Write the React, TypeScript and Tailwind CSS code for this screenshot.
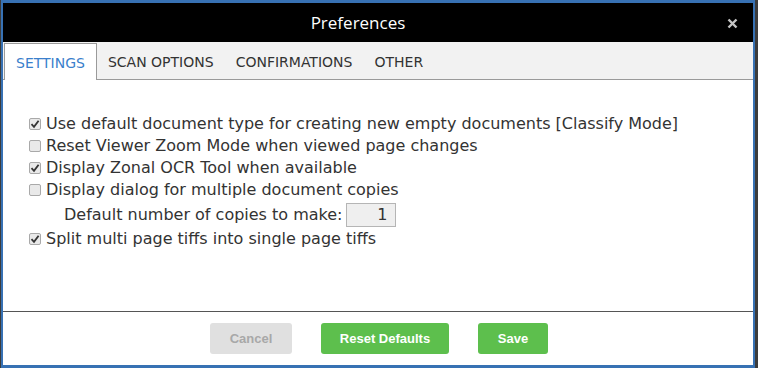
import React from "react";

const options = [
  { label: "Use default document type for creating new empty documents [Classify Mode]", checked: true },
  { label: "Reset Viewer Zoom Mode when viewed page changes", checked: false },
  { label: "Display Zonal OCR Tool when available", checked: true },
  { label: "Display dialog for multiple document copies", checked: false },
];

function Box({ checked }: { checked: boolean }) {
  return (
    <span className="mr-[5px] flex h-[12px] w-[12px] shrink-0 items-center justify-center rounded-[2px] border border-[#a9a9a9] bg-[#e9e9e9]">
      {checked ? (
        <svg width="10" height="10" viewBox="0 0 10 10">
          <path d="M1.5 5.2 L4 7.8 L8.6 1.8" fill="none" stroke="#333" strokeWidth="1.8" />
        </svg>
      ) : null}
    </span>
  );
}

export default function App() {
  const tabs = ["SETTINGS", "SCAN OPTIONS", "CONFIRMATIONS", "OTHER"];
  return (
    <div className="flex h-[368px] w-[758px] bg-[#3c3c3c] pl-px pr-[3px]">
      <div className="flex flex-1 flex-col border-x-2 border-y-[3px] border-[#3771b3] bg-white">
        <div className="relative flex h-[39px] items-center justify-center bg-black pr-[40px] font-['Open_Sans',sans-serif] text-[17px] text-white">
          Preferences
          <svg className="absolute right-[15px] top-[15px]" width="11" height="11" viewBox="0 0 11 11">
            <path d="M1.5 1.5 L9.5 9.5 M9.5 1.5 L1.5 9.5" stroke="#c4c4c4" strokeWidth="2.4" />
          </svg>
        </div>
        <div className="flex h-[38px] items-end border-b border-[#9a9a9a] bg-[#f2f2f2] pl-px font-['DejaVu_Sans',Verdana,sans-serif] text-[14px] text-[#333]">
          {tabs.map((t, i) => (
            <div
              key={t}
              className={
                i === 0
                  ? "-mb-px flex h-[37px] items-center border border-b-0 border-[#9a9a9a] bg-white px-[11px] pt-[3px] text-[#3a7fcc]"
                  : "flex h-[37px] items-center px-[11px] pt-[3px]"
              }
            >
              {t}
            </div>
          ))}
        </div>
        <div className="flex-1 pl-[26px] pt-[33px] font-['DejaVu_Sans',Verdana,sans-serif] text-[16px] leading-[22px] text-[#333]">
          {options.map((o) => (
            <div key={o.label} className="flex items-center">
              <Box checked={o.checked} />
              {o.label}
            </div>
          ))}
          <div className="flex h-[27px] items-center pl-[35px]">
            Default number of copies to make:
            <span className="ml-[3px] flex h-[24px] w-[50px] items-center justify-end border border-[#b5b5b5] bg-[#efefef] pr-[7px]">1</span>
          </div>
          <div className="flex items-center">
            <Box checked={true} />
            Split multi page tiffs into single page tiffs
          </div>
        </div>
        <div className="flex h-[54px] items-center justify-center gap-[29px] border-t border-[#555] pl-[2px] font-['Liberation_Sans',Arial,sans-serif] text-[13px] font-bold">
          <button className="h-[31px] w-[82px] rounded-[3px] bg-[#e0e0e0] text-[#a8a8a8]">Cancel</button>
          <button className="h-[31px] w-[128px] rounded-[3px] bg-[#5dbf4d] text-white">Reset Defaults</button>
          <button className="h-[31px] w-[70px] rounded-[3px] bg-[#5dbf4d] text-white">Save</button>
        </div>
      </div>
    </div>
  );
}
